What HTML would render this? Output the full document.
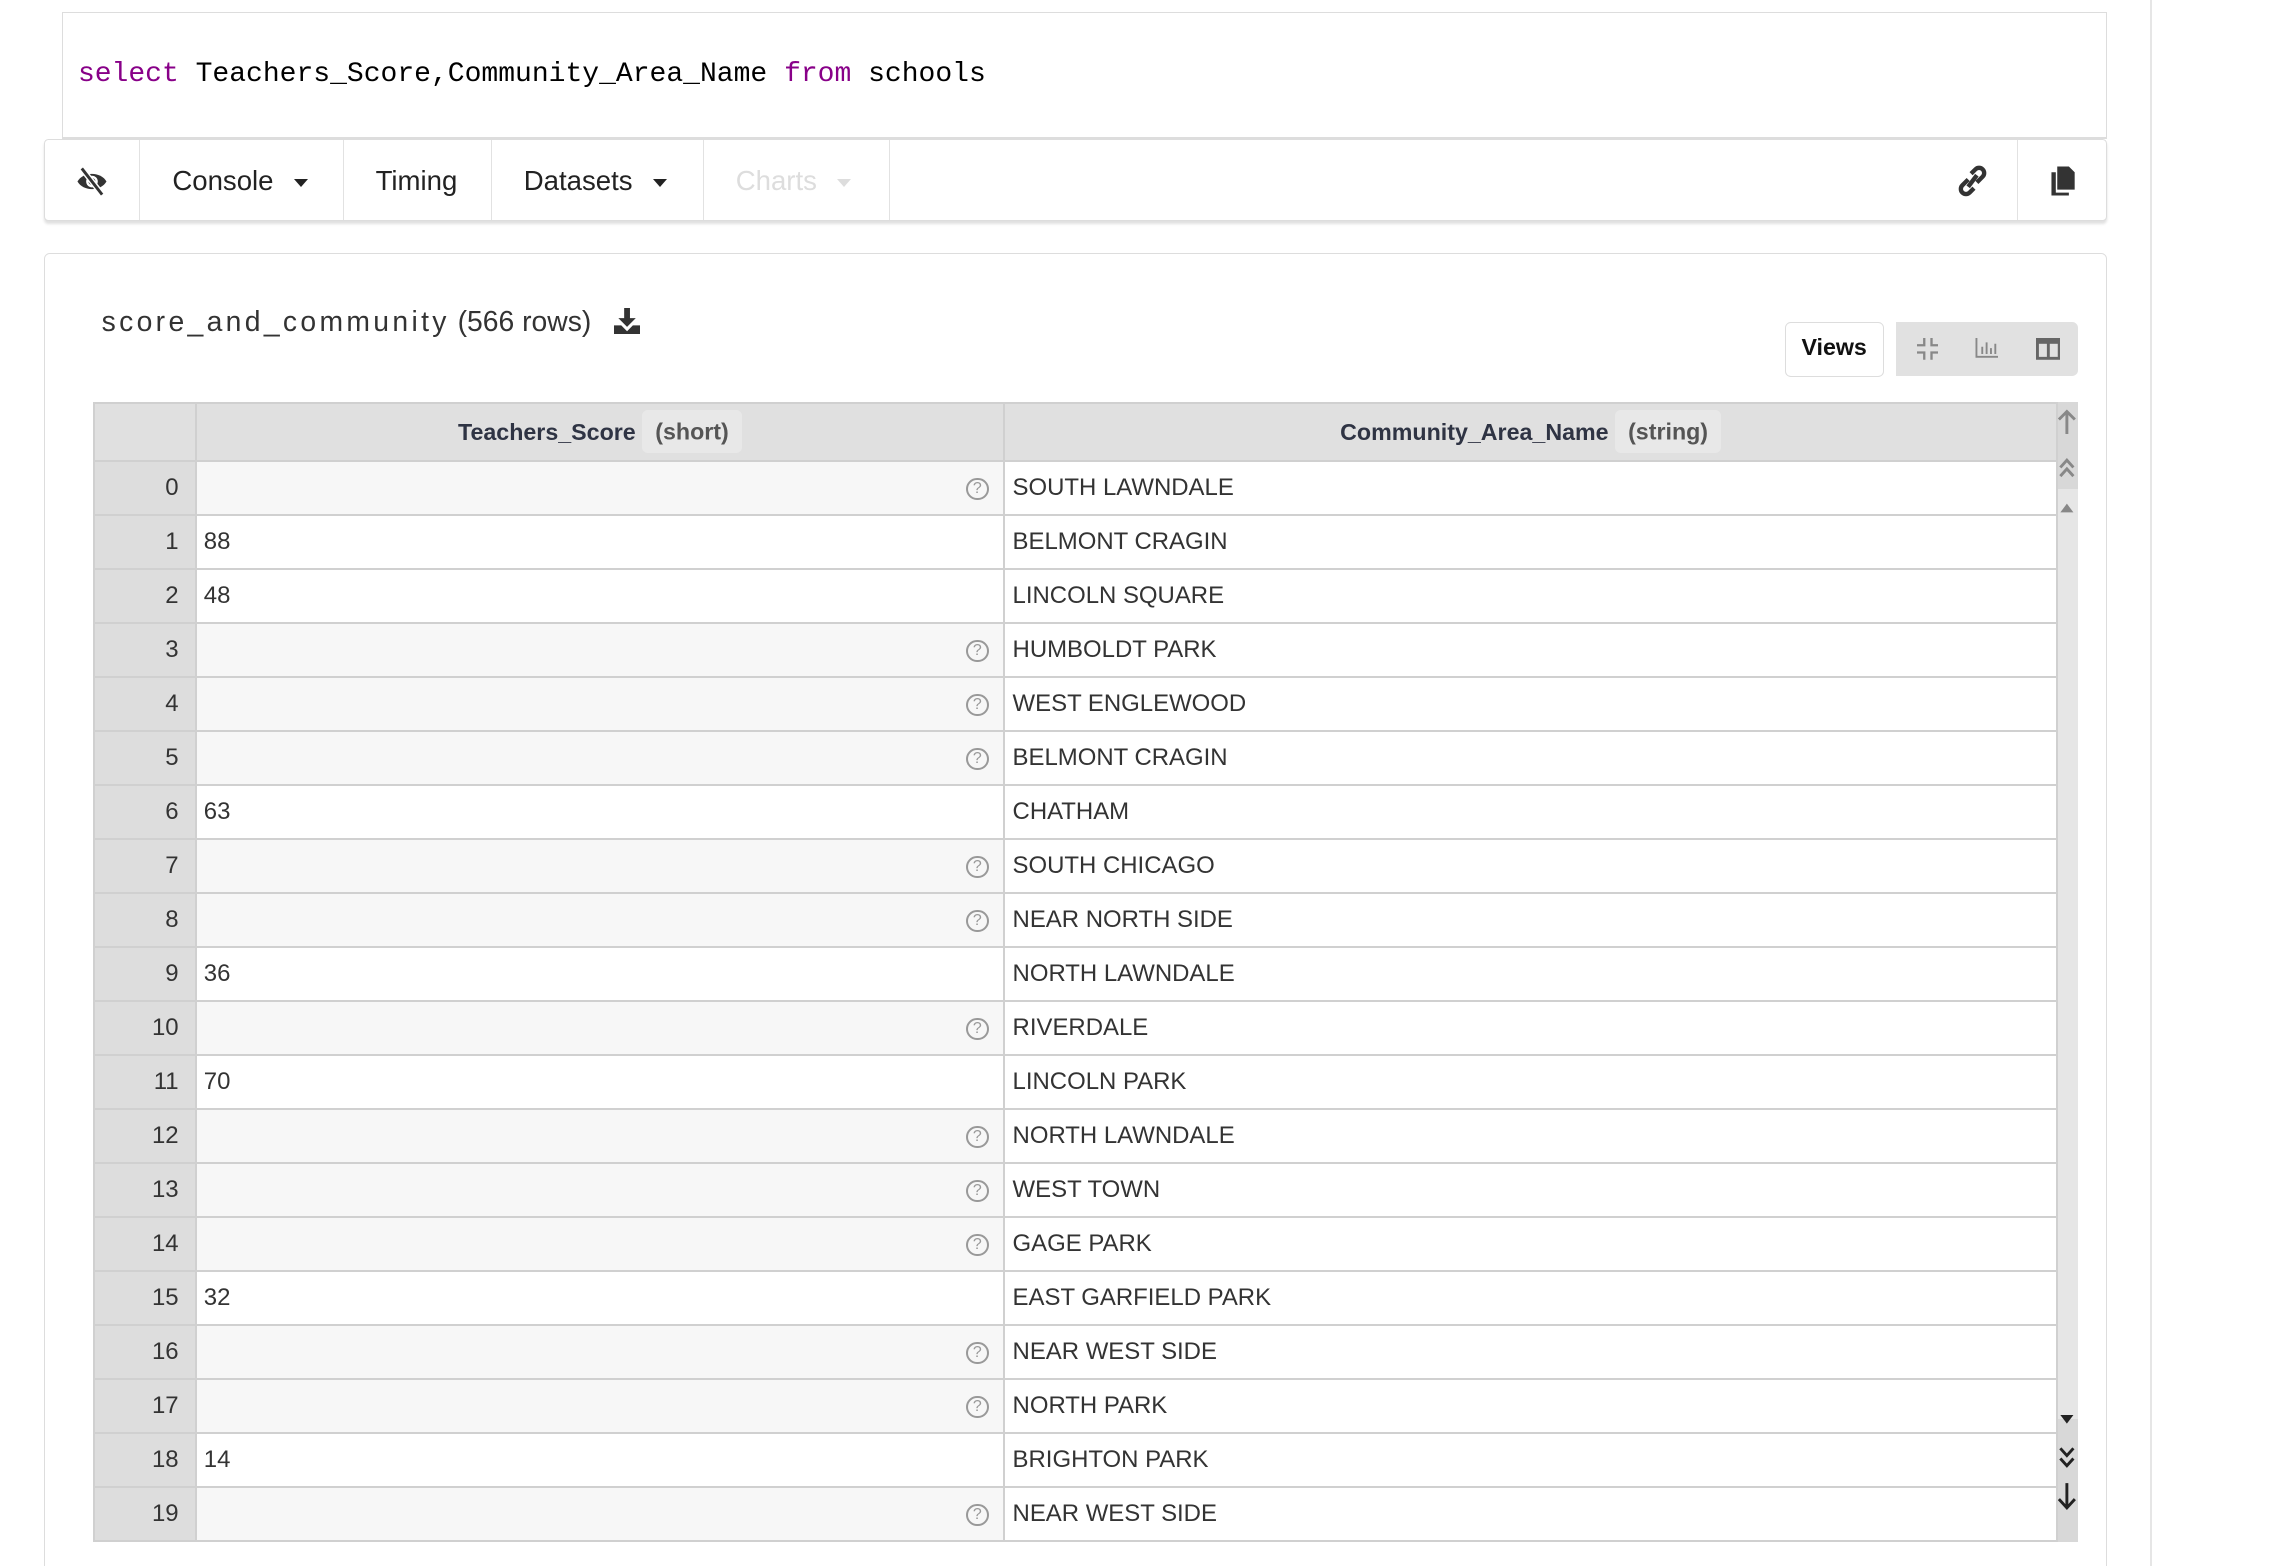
<!DOCTYPE html>
<html><head><meta charset="utf-8"><style>
html,body{margin:0;padding:0;background:#fff;overflow:hidden}
body{width:2276px;height:1566px}
#z{zoom:1.452;position:relative;width:1568px;height:1079px;font-family:"Liberation Sans",sans-serif;color:#333}
.abs{position:absolute}
#code{left:43px;top:8px;width:1407px;height:86px;border:1px solid #ddd;border-bottom:2px solid #ddd}
#code pre{margin:0;position:absolute;left:10px;top:32px;font-family:"Liberation Mono",monospace;font-size:19.3px;color:#000}
.kw{color:#808}
#tb{left:30px;top:96px;width:1420px;height:55px;border:1px solid #ddd;border-radius:3px;box-shadow:0 2px 2px rgba(0,0,0,.12);background:#fff}
.tab{position:absolute;top:0;height:55px;border-right:1px solid #e2e2e2;font-size:19px;line-height:56px;color:#222;box-sizing:border-box}
.car{display:inline-block;width:0;height:0;border-left:5px solid transparent;border-right:5px solid transparent;border-top:6px solid #222;vertical-align:middle;margin-left:14px}
#out{left:30px;top:174px;width:1420px;height:920px;border:1px solid #ddd;border-radius:4px}
#title{left:70px;top:210px;font-size:19.5px;color:#333}
#title .n{letter-spacing:2.3px}
#views{left:1229px;top:222px;width:67px;height:36px;border:1px solid #ddd;border-radius:4px;font-weight:bold;font-size:16px;line-height:34px;text-align:center;color:#111;background:#fff}
#vg{left:1306px;top:222px;width:125px;height:37px;background:#e1e1e1;border-radius:0 4px 4px 0}
table{position:absolute;left:64px;top:277px;border-collapse:collapse;font-size:16.5px;color:#333;table-layout:fixed}
td,th{border:2px solid #d0d0d0;height:37.2px;padding:0 5px;box-sizing:border-box}
th{background:#e0e0e0;height:40px;font-size:16px;color:#2f3444}
th .t{background:#e8e8e8;padding:6px 9px;border-radius:4px;font-weight:bold;color:#555}
td.i{background:#ddd;text-align:right;padding-right:11px}
td.g{background:#f7f7f7;text-align:right;padding-right:10px}
td.c{background:#fff}
.q{display:inline-block;width:13px;height:13px;border:1.4px solid #999;border-radius:50%;font-size:11px;line-height:13px;text-align:center;color:#999;vertical-align:middle}
#sb{left:1416px;top:277px;width:15px;height:785px;background:#d8d8d8}
</style></head><body><div id="z">
<div class="abs" id="code"><pre><span class="kw">select</span> Teachers_Score,Community_Area_Name <span class="kw">from</span> schools</pre></div>
<div class="abs" id="tb">
<div class="tab" style="left:0;width:66px"><svg style="position:absolute;left:22px;top:18px" width="22" height="20" viewBox="0 0 22 20"><path d="M1 10 C5 3 17 3 21 10 C17 17 5 17 1 10Z" fill="#333"/><circle cx="11" cy="10" r="4" fill="#fff"/><circle cx="11" cy="10" r="2.4" fill="#333"/><path d="M4 1 L18 19" stroke="#fff" stroke-width="4"/><path d="M4 1 L18 19" stroke="#333" stroke-width="2"/></svg></div>
<div class="tab" style="left:66px;width:140px;padding-left:22px">Console<span class="car"></span></div>
<div class="tab" style="left:206px;width:102px;padding-left:22px">Timing</div>
<div class="tab" style="left:308px;width:146px;padding-left:22px">Datasets<span class="car"></span></div>
<div class="tab" style="left:454px;width:128px;padding-left:22px;color:#ddd">Charts<span class="car" style="border-top-color:#ddd"></span></div>
<div class="tab" style="left:1358px;width:1px"></div>
<svg class="abs" style="left:1318px;top:17px" width="20" height="22" viewBox="0 0 20 22"><g fill="none" stroke="#333" stroke-width="3"><path d="M9 6 L12 3 A3.5 3.5 0 0 1 17 8 L13 12"/><path d="M11 16 L8 19 A3.5 3.5 0 0 1 3 14 L7 10"/><path d="M7 15 L13 7"/></g></svg>
<svg class="abs" style="left:1381px;top:17px" width="18" height="22" viewBox="0 0 18 22"><path d="M5 1 H13 L17 5 V17 H5Z" fill="#333"/><path d="M1 5 H4 V19 H13 V21 H1Z" fill="#333"/></svg>
</div>
<div class="abs" id="out"></div>
<div class="abs" id="title"><span class="n">score_and_community</span> (566 rows) <svg style="vertical-align:-2px;margin-left:10px" width="18" height="18" viewBox="0 0 18 18"><path d="M7 0 H11 V7 H15 L9 13 L3 7 H7Z" fill="#333"/><path d="M0 12 H5 L9 16 L13 12 H18 V18 H0Z" fill="#333"/></svg></div>
<div class="abs" id="views">Views</div>
<div class="abs" id="vg">
<svg class="abs" style="left:14px;top:11px" width="15" height="15" viewBox="0 0 15 15"><path d="M5 0 V5 H0 M10 0 V5 H15 M0 10 H5 V15 M15 10 H10 V15" fill="none" stroke="#888" stroke-width="1.6"/></svg>
<svg class="abs" style="left:54px;top:11px" width="16" height="14" viewBox="0 0 16 14"><path d="M1 0 V13 H16 M5 6 V11 M8 3 V11 M11 7 V11 M14 4 V11" fill="none" stroke="#888" stroke-width="1.3"/></svg>
<svg class="abs" style="left:96px;top:11px" width="17" height="15" viewBox="0 0 17 15"><rect x="1" y="1" width="15" height="13" fill="none" stroke="#666" stroke-width="2"/><rect x="1" y="1" width="15" height="3" fill="#666"/><path d="M8.5 1 V14" stroke="#666" stroke-width="2"/></svg>
</div>
<div class="abs" id="sb">
<div class="abs" style="left:0;top:60px;width:15px;height:640px;background:#e6e6e6"></div>
<svg class="abs" style="left:0;top:5px" width="15" height="780" viewBox="0 0 15 780">
<g fill="none" stroke="#888" stroke-width="2"><path d="M7.5 2 V17 M2 7 L7.5 1.5 L13 7"/><path d="M3 40 L7.5 35 L12 40 M3 46 L7.5 41 L12 46"/></g>
<path d="M3 71 L7.5 65 L12 71Z" fill="#888"/>
<path d="M3 693 L7.5 699 L12 693Z" fill="#222"/>
<g fill="none" stroke="#222" stroke-width="2"><path d="M3 716 L7.5 721 L12 716 M3 723 L7.5 728 L12 723"/><path d="M7.5 740 V757 M2 751 L7.5 757 L13 751"/></g>
</svg>
</div>
<table>
<colgroup><col style="width:70px"><col style="width:557px"><col style="width:725px"></colgroup>
<tr><th></th><th><span style="font-weight:bold">Teachers_Score</span> <span class="t">(short)</span></th><th><span style="font-weight:bold">Community_Area_Name</span> <span class="t">(string)</span></th></tr>
<tr><td class="i">0</td><td class="g"><span class="q">?</span></td><td class="c">SOUTH LAWNDALE</td></tr>
<tr><td class="i">1</td><td class="c">88</td><td class="c">BELMONT CRAGIN</td></tr>
<tr><td class="i">2</td><td class="c">48</td><td class="c">LINCOLN SQUARE</td></tr>
<tr><td class="i">3</td><td class="g"><span class="q">?</span></td><td class="c">HUMBOLDT PARK</td></tr>
<tr><td class="i">4</td><td class="g"><span class="q">?</span></td><td class="c">WEST ENGLEWOOD</td></tr>
<tr><td class="i">5</td><td class="g"><span class="q">?</span></td><td class="c">BELMONT CRAGIN</td></tr>
<tr><td class="i">6</td><td class="c">63</td><td class="c">CHATHAM</td></tr>
<tr><td class="i">7</td><td class="g"><span class="q">?</span></td><td class="c">SOUTH CHICAGO</td></tr>
<tr><td class="i">8</td><td class="g"><span class="q">?</span></td><td class="c">NEAR NORTH SIDE</td></tr>
<tr><td class="i">9</td><td class="c">36</td><td class="c">NORTH LAWNDALE</td></tr>
<tr><td class="i">10</td><td class="g"><span class="q">?</span></td><td class="c">RIVERDALE</td></tr>
<tr><td class="i">11</td><td class="c">70</td><td class="c">LINCOLN PARK</td></tr>
<tr><td class="i">12</td><td class="g"><span class="q">?</span></td><td class="c">NORTH LAWNDALE</td></tr>
<tr><td class="i">13</td><td class="g"><span class="q">?</span></td><td class="c">WEST TOWN</td></tr>
<tr><td class="i">14</td><td class="g"><span class="q">?</span></td><td class="c">GAGE PARK</td></tr>
<tr><td class="i">15</td><td class="c">32</td><td class="c">EAST GARFIELD PARK</td></tr>
<tr><td class="i">16</td><td class="g"><span class="q">?</span></td><td class="c">NEAR WEST SIDE</td></tr>
<tr><td class="i">17</td><td class="g"><span class="q">?</span></td><td class="c">NORTH PARK</td></tr>
<tr><td class="i">18</td><td class="c">14</td><td class="c">BRIGHTON PARK</td></tr>
<tr><td class="i">19</td><td class="g"><span class="q">?</span></td><td class="c">NEAR WEST SIDE</td></tr>
</table>
<div class="abs" style="left:1481px;top:0;width:1px;height:1079px;background:#e6e6e6"></div>
</div></body></html>
